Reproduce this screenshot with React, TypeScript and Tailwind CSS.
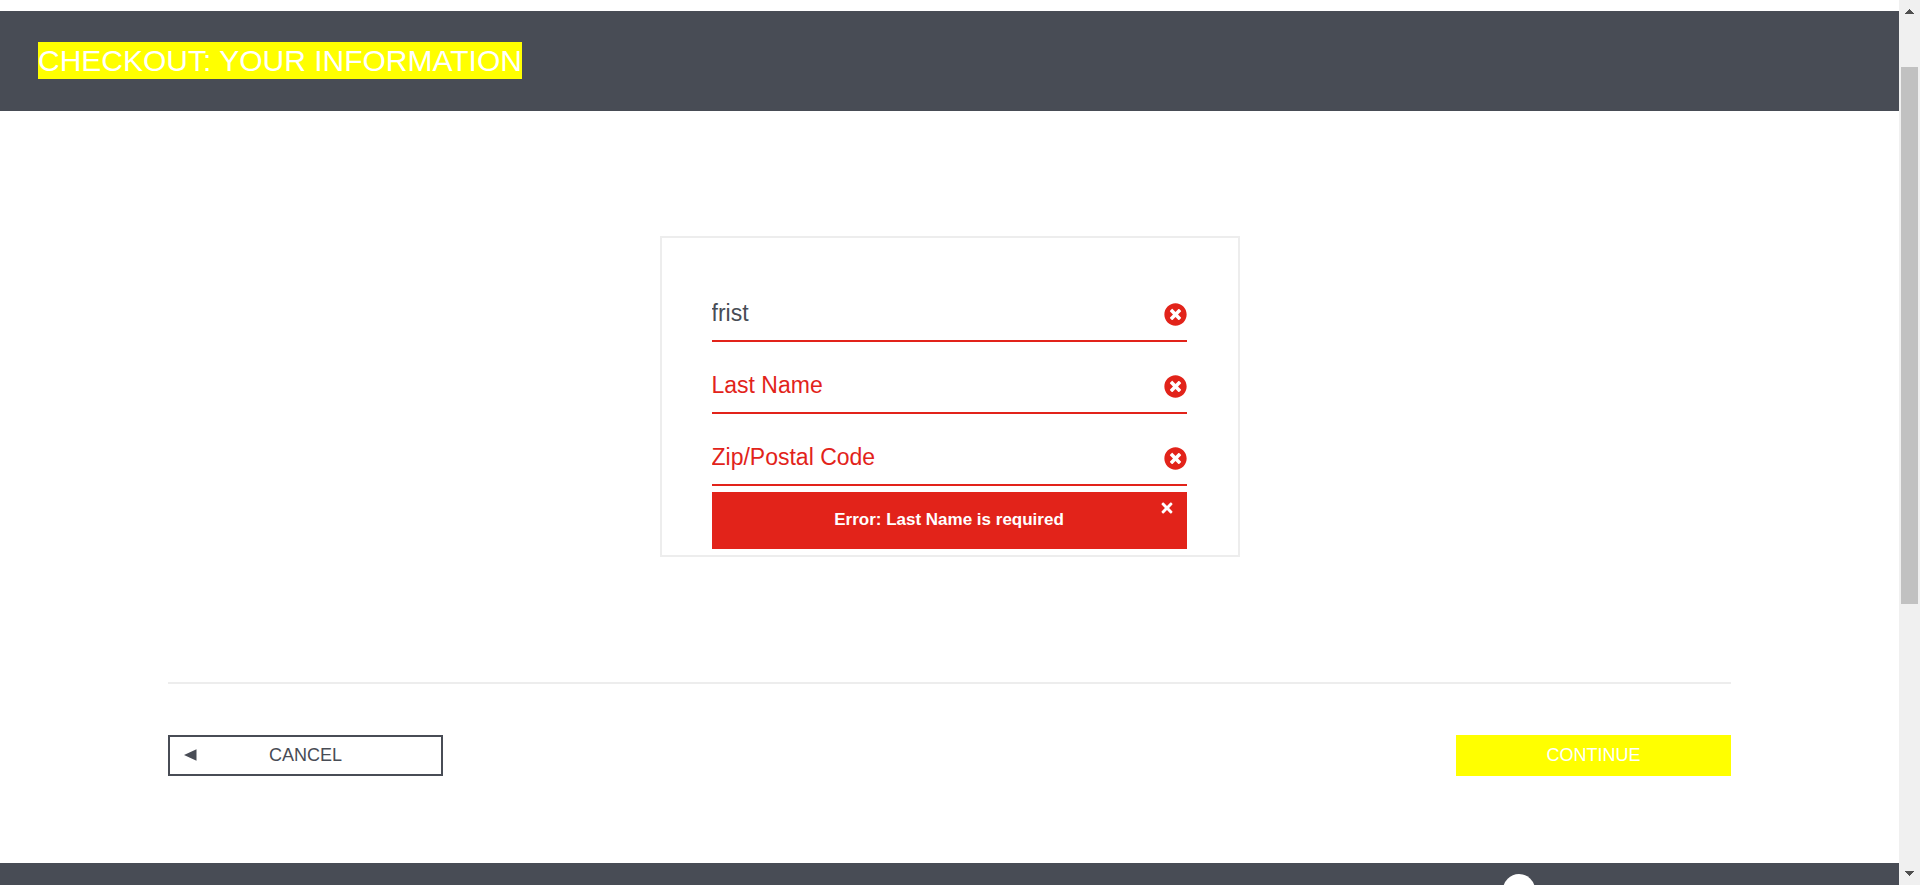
import { useState } from "react";
import { FaTimes, FaTimesCircle } from "react-icons/fa";

type FieldProps = { id: string; label: string; initial?: string };

function Field({ id, label, initial = "" }: FieldProps) {
  const [value, setValue] = useState(initial);
  return (
    <div className="flex h-[72px] items-end border-b-2 border-[#e2231a] pb-[11px]">
      <input
        id={id}
        type="text"
        aria-label={label}
        placeholder={label}
        value={value}
        onChange={(e) => setValue(e.target.value)}
        className="h-8 min-w-0 flex-1 bg-transparent text-[23px] text-[#484c55] outline-none placeholder:text-[#e2231a]"
      />
      <FaTimesCircle className="mb-[3px] size-[23px] text-[#e2231a]" aria-hidden="true" />
    </div>
  );
}

function ScrollTrack() {
  return (
    <div className="flex w-[21px] shrink-0 flex-col items-center bg-[#f0f0f0] py-[9px]" aria-hidden="true">
      <svg width="9" height="5" viewBox="0 0 9 5" shapeRendering="crispEdges" fill="#505050">
        <path d="M4 0h1v1h1v1h1v1h1v1h1v1H0V4h1V3h1V2h1V1h1z" />
      </svg>
      <div className="mt-[53px] h-[537px] w-[17px] bg-[#c1c1c1]" />
      <svg className="mt-auto" width="9" height="5" viewBox="0 0 9 5" shapeRendering="crispEdges" fill="#505050">
        <path d="M0 0h9v1H8v1H7v1H6v1H5v1H4V4H3V3H2V2H1V1H0z" />
      </svg>
    </div>
  );
}

export default function App() {
  const [showError, setShowError] = useState(true);

  return (
    <div className="flex h-screen overflow-hidden bg-white font-['Liberation_Sans',Arial,sans-serif] text-[#484c55]">
      <div className="min-w-0 flex-1 overflow-hidden pt-[11px]">
        <header className="flex items-start bg-[#484c55] px-[38px] pt-[31px] pb-8">
          <h1 className="bg-[#ffff00] text-[30px] leading-[37px] text-white">CHECKOUT: YOUR INFORMATION</h1>
        </header>

        <main className="px-[168px]">
          <form onSubmit={(e) => e.preventDefault()}>
            <div className="mx-auto mt-[125px] max-w-[580px] border-2 border-[#ededed] pt-8 pr-[51px] pb-1.5 pl-[50px]">
              <Field id="first-name" label="First Name" initial="frist" />
              <Field id="last-name" label="Last Name" />
              <Field id="postal-code" label="Zip/Postal Code" />
              {showError && (
                <div
                  className="relative mt-1.5 flex h-[57px] items-center justify-center bg-[#e2231a] pb-0.5 text-white"
                  role="alert"
                >
                  <h3 className="text-[17px] leading-5 font-bold">Error: Last Name is required</h3>
                  <button
                    type="button"
                    aria-label="Dismiss error"
                    onClick={() => setShowError(false)}
                    className="absolute top-2 right-3"
                  >
                    <FaTimes className="size-4" />
                  </button>
                </div>
              )}
            </div>

            <div className="mt-[125px] flex items-start justify-between border-t-2 border-[#ededed] pt-[51px] pb-[87px]">
              <button
                type="button"
                className="relative h-[41px] w-[275px] border-2 border-[#484c55] bg-white pb-0.5 text-lg leading-5"
              >
                <svg
                  className="absolute top-3 left-3.5"
                  width="13"
                  height="12"
                  viewBox="0 0 13 12"
                  fill="currentColor"
                  aria-hidden="true"
                >
                  <path d="M0 6 12.5 0.2V11.8z" />
                </svg>
                CANCEL
              </button>
              <button type="submit" className="h-[41px] w-[275px] bg-[#ffff00] pb-0.5 text-lg leading-5 text-white">
                CONTINUE
              </button>
            </div>
          </form>
        </main>

        <footer className="flex h-24 justify-end bg-[#484c55] pt-[11px] pr-[364px]">
          <div className="size-8 rounded-full bg-white" />
        </footer>
      </div>
      <ScrollTrack />
    </div>
  );
}
